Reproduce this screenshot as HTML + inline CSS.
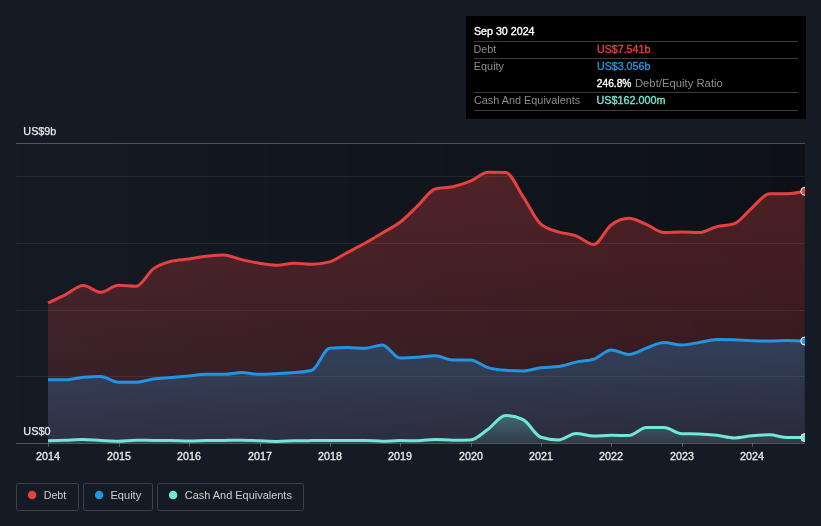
<!DOCTYPE html>
<html><head><meta charset="utf-8">
<style>
html,body{margin:0;padding:0;}
body{width:821px;height:526px;overflow:hidden;background:#151b24;position:relative;font-family:"Liberation Sans",sans-serif;}
svg{position:absolute;left:0;top:0;will-change:transform;}
</style></head><body>
<svg width="821" height="526" viewBox="0 0 821 526">
<defs>
<linearGradient id="bgg" x1="0" y1="0" x2="1" y2="0">
<stop offset="0" stop-color="#000" stop-opacity="0"/>
<stop offset="1" stop-color="#000" stop-opacity="0.35"/>
</linearGradient>
<linearGradient id="dg" x1="0" y1="0" x2="0" y2="1">
<stop offset="0" stop-color="#e64141" stop-opacity="0.30"/>
<stop offset="1" stop-color="#e64141" stop-opacity="0.135"/>
</linearGradient>
<linearGradient id="eg" x1="0" y1="0" x2="0" y2="1">
<stop offset="0" stop-color="#2394df" stop-opacity="0.30"/>
<stop offset="1" stop-color="#2394df" stop-opacity="0.145"/>
</linearGradient>
<linearGradient id="cg" x1="0" y1="0" x2="0" y2="1">
<stop offset="0" stop-color="#71e7d6" stop-opacity="0.30"/>
<stop offset="1" stop-color="#71e7d6" stop-opacity="0.08"/>
</linearGradient>
<clipPath id="pc"><rect x="16" y="0" width="789" height="443"/></clipPath>
</defs>
<rect x="16" y="143" width="789" height="300" fill="url(#bgg)"/>
<g clip-path="url(#pc)">
<path d="M48.00,303.00C53.87,300.26,59.73,297.52,65.60,294.60C71.47,291.68,77.33,285.50,83.20,285.50C89.07,285.50,94.93,292.30,100.80,292.30C106.67,292.30,112.53,285.30,118.40,285.30C124.27,285.30,130.13,286.30,136.00,286.30C141.87,286.30,147.73,272.77,153.60,268.60C159.47,264.43,165.33,262.83,171.20,261.30C177.07,259.77,182.93,259.85,188.80,259.00C194.67,258.15,200.53,256.87,206.40,256.20C212.27,255.53,218.13,255.00,224.00,255.00C229.87,255.00,235.73,258.22,241.60,259.60C247.47,260.98,253.33,262.35,259.20,263.30C265.07,264.25,270.93,265.30,276.80,265.30C282.67,265.30,288.53,263.30,294.40,263.30C300.27,263.30,306.13,264.30,312.00,264.30C317.87,264.30,323.73,263.50,329.60,261.90C335.47,260.30,341.33,255.70,347.20,252.60C353.07,249.50,358.93,246.57,364.80,243.30C370.67,240.03,376.53,236.50,382.40,233.00C388.27,229.50,394.13,226.82,400.00,222.30C405.87,217.78,411.73,211.45,417.60,205.90C423.47,200.35,429.33,190.53,435.20,189.00C441.07,187.47,446.93,188.00,452.80,186.70C458.67,185.40,464.53,183.60,470.40,181.20C476.27,178.80,482.13,172.30,488.00,172.30C493.87,172.30,499.73,172.37,505.60,172.50C511.47,172.63,517.33,188.18,523.20,196.80C529.07,205.42,534.93,219.07,540.80,224.20C546.67,229.33,552.53,229.97,558.40,231.90C564.27,233.83,570.13,233.70,576.00,235.80C581.87,237.90,587.73,244.50,593.60,244.50C599.47,244.50,605.33,229.37,611.20,225.00C617.07,220.63,622.93,218.30,628.80,218.30C634.67,218.30,640.53,222.02,646.40,224.40C652.27,226.78,658.13,232.60,664.00,232.60C669.87,232.60,675.73,231.90,681.60,231.90C687.47,231.90,693.33,232.60,699.20,232.60C705.07,232.60,710.93,228.10,716.80,226.60C722.67,225.10,728.53,225.60,734.40,223.60C740.27,221.60,746.13,212.77,752.00,207.80C757.87,202.83,763.73,193.80,769.60,193.80C775.47,193.80,781.33,193.80,787.20,193.80C793.07,193.80,798.93,192.55,804.80,191.30L804.80,443 L48.00,443 Z" fill="url(#dg)"/>
<path d="M48.00,379.70C53.87,379.70,59.73,379.70,65.60,379.70C71.47,379.70,77.33,377.77,83.20,377.30C89.07,376.83,94.93,376.60,100.80,376.60C106.67,376.60,112.53,382.20,118.40,382.20C124.27,382.20,130.13,382.20,136.00,382.20C141.87,382.20,147.73,379.78,153.60,379.00C159.47,378.22,165.33,378.02,171.20,377.50C177.07,376.98,182.93,376.43,188.80,375.90C194.67,375.37,200.53,374.30,206.40,374.30C212.27,374.30,218.13,374.30,224.00,374.30C229.87,374.30,235.73,372.60,241.60,372.60C247.47,372.60,253.33,374.30,259.20,374.30C265.07,374.30,270.93,373.98,276.80,373.70C282.67,373.42,288.53,373.18,294.40,372.60C300.27,372.02,306.13,371.80,312.00,370.20C317.87,368.60,323.73,348.60,329.60,348.20C335.47,347.80,341.33,347.60,347.20,347.60C353.07,347.60,358.93,348.20,364.80,348.20C370.67,348.20,376.53,345.00,382.40,345.00C388.27,345.00,394.13,358.10,400.00,358.10C405.87,358.10,411.73,357.70,417.60,357.30C423.47,356.90,429.33,355.70,435.20,355.70C441.07,355.70,446.93,359.90,452.80,359.90C458.67,359.90,464.53,359.90,470.40,359.90C476.27,359.90,482.13,365.87,488.00,367.60C493.87,369.33,499.73,369.90,505.60,370.30C511.47,370.70,517.33,370.90,523.20,370.90C529.07,370.90,534.93,368.42,540.80,367.70C546.67,366.98,552.53,367.33,558.40,366.60C564.27,365.87,570.13,363.32,576.00,362.10C581.87,360.88,587.73,361.17,593.60,359.30C599.47,357.43,605.33,350.00,611.20,350.00C617.07,350.00,622.93,354.40,628.80,354.40C634.67,354.40,640.53,350.18,646.40,348.20C652.27,346.22,658.13,342.50,664.00,342.50C669.87,342.50,675.73,344.90,681.60,344.90C687.47,344.90,693.33,343.28,699.20,342.40C705.07,341.52,710.93,339.60,716.80,339.60C722.67,339.60,728.53,339.67,734.40,339.80C740.27,339.93,746.13,340.73,752.00,340.80C757.87,340.87,763.73,340.90,769.60,340.90C775.47,340.90,781.33,340.40,787.20,340.40C793.07,340.40,798.93,340.70,804.80,341.00L804.80,443 L48.00,443 Z" fill="url(#eg)"/>
<path d="M48.00,440.80C53.87,440.60,59.73,440.40,65.60,440.20C71.47,440.00,77.33,439.60,83.20,439.60C89.07,439.60,94.93,440.23,100.80,440.50C106.67,440.77,112.53,441.20,118.40,441.20C124.27,441.20,130.13,440.20,136.00,440.20C141.87,440.20,147.73,440.35,153.60,440.40C159.47,440.45,165.33,440.43,171.20,440.50C177.07,440.57,182.93,441.00,188.80,441.00C194.67,441.00,200.53,440.70,206.40,440.60C212.27,440.50,218.13,440.47,224.00,440.40C229.87,440.33,235.73,440.20,241.60,440.20C247.47,440.20,253.33,440.60,259.20,440.80C265.07,441.00,270.93,441.40,276.80,441.40C282.67,441.40,288.53,440.93,294.40,440.80C300.27,440.67,306.13,440.65,312.00,440.60C317.87,440.55,323.73,440.50,329.60,440.50C335.47,440.50,341.33,440.50,347.20,440.50C353.07,440.50,358.93,440.50,364.80,440.50C370.67,440.50,376.53,441.20,382.40,441.20C388.27,441.20,394.13,440.60,400.00,440.60C405.87,440.60,411.73,440.80,417.60,440.80C423.47,440.80,429.33,439.40,435.20,439.40C441.07,439.40,446.93,440.20,452.80,440.20C458.67,440.20,464.53,440.13,470.40,440.00C476.27,439.87,482.13,433.30,488.00,429.20C493.87,425.10,499.73,415.40,505.60,415.40C511.47,415.40,517.33,416.83,523.20,419.70C529.07,422.57,534.93,435.40,540.80,437.20C546.67,439.00,552.53,439.90,558.40,439.90C564.27,439.90,570.13,433.50,576.00,433.50C581.87,433.50,587.73,436.10,593.60,436.10C599.47,436.10,605.33,435.30,611.20,435.30C617.07,435.30,622.93,435.60,628.80,435.60C634.67,435.60,640.53,427.60,646.40,427.60C652.27,427.60,658.13,427.60,664.00,427.60C669.87,427.60,675.73,433.57,681.60,433.70C687.47,433.83,693.33,433.77,699.20,433.90C705.07,434.03,710.93,434.53,716.80,435.20C722.67,435.87,728.53,437.90,734.40,437.90C740.27,437.90,746.13,436.22,752.00,435.70C757.87,435.18,763.73,434.80,769.60,434.80C775.47,434.80,781.33,437.60,787.20,437.60C793.07,437.60,798.93,437.60,804.80,437.60L804.80,443 L48.00,443 Z" fill="url(#cg)"/>
</g>
<g fill="#fff">
<rect x="16" y="143" width="789" height="1" fill-opacity="0.25"/>
<rect x="16" y="176" width="789" height="1" fill-opacity="0.07"/>
<rect x="16" y="243" width="789" height="1" fill-opacity="0.07"/>
<rect x="16" y="310" width="789" height="1" fill-opacity="0.07"/>
<rect x="16" y="376" width="789" height="1" fill-opacity="0.07"/>
</g>
<g clip-path="url(#pc)" fill="none" stroke-width="3" stroke-linejoin="round" stroke-linecap="butt">
<path d="M48.00,303.00C53.87,300.26,59.73,297.52,65.60,294.60C71.47,291.68,77.33,285.50,83.20,285.50C89.07,285.50,94.93,292.30,100.80,292.30C106.67,292.30,112.53,285.30,118.40,285.30C124.27,285.30,130.13,286.30,136.00,286.30C141.87,286.30,147.73,272.77,153.60,268.60C159.47,264.43,165.33,262.83,171.20,261.30C177.07,259.77,182.93,259.85,188.80,259.00C194.67,258.15,200.53,256.87,206.40,256.20C212.27,255.53,218.13,255.00,224.00,255.00C229.87,255.00,235.73,258.22,241.60,259.60C247.47,260.98,253.33,262.35,259.20,263.30C265.07,264.25,270.93,265.30,276.80,265.30C282.67,265.30,288.53,263.30,294.40,263.30C300.27,263.30,306.13,264.30,312.00,264.30C317.87,264.30,323.73,263.50,329.60,261.90C335.47,260.30,341.33,255.70,347.20,252.60C353.07,249.50,358.93,246.57,364.80,243.30C370.67,240.03,376.53,236.50,382.40,233.00C388.27,229.50,394.13,226.82,400.00,222.30C405.87,217.78,411.73,211.45,417.60,205.90C423.47,200.35,429.33,190.53,435.20,189.00C441.07,187.47,446.93,188.00,452.80,186.70C458.67,185.40,464.53,183.60,470.40,181.20C476.27,178.80,482.13,172.30,488.00,172.30C493.87,172.30,499.73,172.37,505.60,172.50C511.47,172.63,517.33,188.18,523.20,196.80C529.07,205.42,534.93,219.07,540.80,224.20C546.67,229.33,552.53,229.97,558.40,231.90C564.27,233.83,570.13,233.70,576.00,235.80C581.87,237.90,587.73,244.50,593.60,244.50C599.47,244.50,605.33,229.37,611.20,225.00C617.07,220.63,622.93,218.30,628.80,218.30C634.67,218.30,640.53,222.02,646.40,224.40C652.27,226.78,658.13,232.60,664.00,232.60C669.87,232.60,675.73,231.90,681.60,231.90C687.47,231.90,693.33,232.60,699.20,232.60C705.07,232.60,710.93,228.10,716.80,226.60C722.67,225.10,728.53,225.60,734.40,223.60C740.27,221.60,746.13,212.77,752.00,207.80C757.87,202.83,763.73,193.80,769.60,193.80C775.47,193.80,781.33,193.80,787.20,193.80C793.07,193.80,798.93,192.55,804.80,191.30" stroke="#e64141"/>
<path d="M48.00,379.70C53.87,379.70,59.73,379.70,65.60,379.70C71.47,379.70,77.33,377.77,83.20,377.30C89.07,376.83,94.93,376.60,100.80,376.60C106.67,376.60,112.53,382.20,118.40,382.20C124.27,382.20,130.13,382.20,136.00,382.20C141.87,382.20,147.73,379.78,153.60,379.00C159.47,378.22,165.33,378.02,171.20,377.50C177.07,376.98,182.93,376.43,188.80,375.90C194.67,375.37,200.53,374.30,206.40,374.30C212.27,374.30,218.13,374.30,224.00,374.30C229.87,374.30,235.73,372.60,241.60,372.60C247.47,372.60,253.33,374.30,259.20,374.30C265.07,374.30,270.93,373.98,276.80,373.70C282.67,373.42,288.53,373.18,294.40,372.60C300.27,372.02,306.13,371.80,312.00,370.20C317.87,368.60,323.73,348.60,329.60,348.20C335.47,347.80,341.33,347.60,347.20,347.60C353.07,347.60,358.93,348.20,364.80,348.20C370.67,348.20,376.53,345.00,382.40,345.00C388.27,345.00,394.13,358.10,400.00,358.10C405.87,358.10,411.73,357.70,417.60,357.30C423.47,356.90,429.33,355.70,435.20,355.70C441.07,355.70,446.93,359.90,452.80,359.90C458.67,359.90,464.53,359.90,470.40,359.90C476.27,359.90,482.13,365.87,488.00,367.60C493.87,369.33,499.73,369.90,505.60,370.30C511.47,370.70,517.33,370.90,523.20,370.90C529.07,370.90,534.93,368.42,540.80,367.70C546.67,366.98,552.53,367.33,558.40,366.60C564.27,365.87,570.13,363.32,576.00,362.10C581.87,360.88,587.73,361.17,593.60,359.30C599.47,357.43,605.33,350.00,611.20,350.00C617.07,350.00,622.93,354.40,628.80,354.40C634.67,354.40,640.53,350.18,646.40,348.20C652.27,346.22,658.13,342.50,664.00,342.50C669.87,342.50,675.73,344.90,681.60,344.90C687.47,344.90,693.33,343.28,699.20,342.40C705.07,341.52,710.93,339.60,716.80,339.60C722.67,339.60,728.53,339.67,734.40,339.80C740.27,339.93,746.13,340.73,752.00,340.80C757.87,340.87,763.73,340.90,769.60,340.90C775.47,340.90,781.33,340.40,787.20,340.40C793.07,340.40,798.93,340.70,804.80,341.00" stroke="#2394df"/>
<path d="M48.00,440.80C53.87,440.60,59.73,440.40,65.60,440.20C71.47,440.00,77.33,439.60,83.20,439.60C89.07,439.60,94.93,440.23,100.80,440.50C106.67,440.77,112.53,441.20,118.40,441.20C124.27,441.20,130.13,440.20,136.00,440.20C141.87,440.20,147.73,440.35,153.60,440.40C159.47,440.45,165.33,440.43,171.20,440.50C177.07,440.57,182.93,441.00,188.80,441.00C194.67,441.00,200.53,440.70,206.40,440.60C212.27,440.50,218.13,440.47,224.00,440.40C229.87,440.33,235.73,440.20,241.60,440.20C247.47,440.20,253.33,440.60,259.20,440.80C265.07,441.00,270.93,441.40,276.80,441.40C282.67,441.40,288.53,440.93,294.40,440.80C300.27,440.67,306.13,440.65,312.00,440.60C317.87,440.55,323.73,440.50,329.60,440.50C335.47,440.50,341.33,440.50,347.20,440.50C353.07,440.50,358.93,440.50,364.80,440.50C370.67,440.50,376.53,441.20,382.40,441.20C388.27,441.20,394.13,440.60,400.00,440.60C405.87,440.60,411.73,440.80,417.60,440.80C423.47,440.80,429.33,439.40,435.20,439.40C441.07,439.40,446.93,440.20,452.80,440.20C458.67,440.20,464.53,440.13,470.40,440.00C476.27,439.87,482.13,433.30,488.00,429.20C493.87,425.10,499.73,415.40,505.60,415.40C511.47,415.40,517.33,416.83,523.20,419.70C529.07,422.57,534.93,435.40,540.80,437.20C546.67,439.00,552.53,439.90,558.40,439.90C564.27,439.90,570.13,433.50,576.00,433.50C581.87,433.50,587.73,436.10,593.60,436.10C599.47,436.10,605.33,435.30,611.20,435.30C617.07,435.30,622.93,435.60,628.80,435.60C634.67,435.60,640.53,427.60,646.40,427.60C652.27,427.60,658.13,427.60,664.00,427.60C669.87,427.60,675.73,433.57,681.60,433.70C687.47,433.83,693.33,433.77,699.20,433.90C705.07,434.03,710.93,434.53,716.80,435.20C722.67,435.87,728.53,437.90,734.40,437.90C740.27,437.90,746.13,436.22,752.00,435.70C757.87,435.18,763.73,434.80,769.60,434.80C775.47,434.80,781.33,437.60,787.20,437.60C793.07,437.60,798.93,437.60,804.80,437.60" stroke="#71e7d6"/>
</g>
<rect x="16" y="443" width="789" height="1" fill="#fff" fill-opacity="0.25"/>
<g fill="#fff" fill-opacity="0.25">
<rect x="48" y="443" width="1" height="4"/>
<rect x="119" y="443" width="1" height="4"/>
<rect x="189" y="443" width="1" height="4"/>
<rect x="260" y="443" width="1" height="4"/>
<rect x="330" y="443" width="1" height="4"/>
<rect x="400" y="443" width="1" height="4"/>
<rect x="471" y="443" width="1" height="4"/>
<rect x="541" y="443" width="1" height="4"/>
<rect x="611" y="443" width="1" height="4"/>
<rect x="682" y="443" width="1" height="4"/>
<rect x="752" y="443" width="1" height="4"/>
</g>
<g clip-path="url(#pc)" stroke="#fff" stroke-width="1">
<circle cx="804.80" cy="191.30" r="4" fill="#e64141"/>
<circle cx="804.80" cy="341.00" r="4" fill="#2394df"/>
<circle cx="804.80" cy="437.60" r="4" fill="#71e7d6"/>
</g>
<g font-family="Liberation Sans, sans-serif">
<text x="23.35" y="135.00" font-size="11.00" font-weight="normal" fill="#ececec" textLength="33.04" lengthAdjust="spacingAndGlyphs" stroke="#ececec" stroke-width="0.25">US$9b</text>
<text x="23.35" y="435.00" font-size="11.00" font-weight="normal" fill="#ececec" textLength="27.14" lengthAdjust="spacingAndGlyphs" stroke="#ececec" stroke-width="0.25">US$0</text>
<text x="36.02" y="459.80" font-size="10.50" font-weight="normal" fill="#ececec" textLength="23.87" lengthAdjust="spacingAndGlyphs" stroke="#ececec" stroke-width="0.3">2014</text>
<text x="107.02" y="459.80" font-size="10.50" font-weight="normal" fill="#ececec" textLength="23.87" lengthAdjust="spacingAndGlyphs" stroke="#ececec" stroke-width="0.3">2015</text>
<text x="177.02" y="459.80" font-size="10.50" font-weight="normal" fill="#ececec" textLength="23.87" lengthAdjust="spacingAndGlyphs" stroke="#ececec" stroke-width="0.3">2016</text>
<text x="248.02" y="459.80" font-size="10.50" font-weight="normal" fill="#ececec" textLength="23.87" lengthAdjust="spacingAndGlyphs" stroke="#ececec" stroke-width="0.3">2017</text>
<text x="318.02" y="459.80" font-size="10.50" font-weight="normal" fill="#ececec" textLength="23.87" lengthAdjust="spacingAndGlyphs" stroke="#ececec" stroke-width="0.3">2018</text>
<text x="388.02" y="459.80" font-size="10.50" font-weight="normal" fill="#ececec" textLength="23.87" lengthAdjust="spacingAndGlyphs" stroke="#ececec" stroke-width="0.3">2019</text>
<text x="459.02" y="459.80" font-size="10.50" font-weight="normal" fill="#ececec" textLength="23.87" lengthAdjust="spacingAndGlyphs" stroke="#ececec" stroke-width="0.3">2020</text>
<text x="529.02" y="459.80" font-size="10.50" font-weight="normal" fill="#ececec" textLength="23.87" lengthAdjust="spacingAndGlyphs" stroke="#ececec" stroke-width="0.3">2021</text>
<text x="599.02" y="459.80" font-size="10.50" font-weight="normal" fill="#ececec" textLength="23.87" lengthAdjust="spacingAndGlyphs" stroke="#ececec" stroke-width="0.3">2022</text>
<text x="670.02" y="459.80" font-size="10.50" font-weight="normal" fill="#ececec" textLength="23.87" lengthAdjust="spacingAndGlyphs" stroke="#ececec" stroke-width="0.3">2023</text>
<text x="740.02" y="459.80" font-size="10.50" font-weight="normal" fill="#ececec" textLength="23.87" lengthAdjust="spacingAndGlyphs" stroke="#ececec" stroke-width="0.3">2024</text>
<rect x="466" y="16" width="340" height="103" fill="#000"/>
<rect x="474" y="41" width="324" height="1" fill="#3b3b3b"/>
<rect x="474" y="58" width="324" height="1" fill="#3b3b3b"/>
<rect x="474" y="92" width="324" height="1" fill="#3b3b3b"/>
<rect x="474" y="110" width="324" height="1" fill="#3b3b3b"/>
<text x="473.94" y="34.90" font-size="10.60" font-weight="normal" fill="#ffffff" textLength="60.63" lengthAdjust="spacingAndGlyphs" stroke="#ffffff" stroke-width="0.35">Sep 30 2024</text>
<text x="473.48" y="52.80" font-size="10.50" font-weight="normal" fill="#8c8c8c" textLength="22.82" lengthAdjust="spacingAndGlyphs">Debt</text>
<text x="473.84" y="69.80" font-size="10.50" font-weight="normal" fill="#8c8c8c" textLength="30.18" lengthAdjust="spacingAndGlyphs">Equity</text>
<text x="473.91" y="103.80" font-size="10.50" font-weight="normal" fill="#8c8c8c" textLength="106.35" lengthAdjust="spacingAndGlyphs">Cash And Equivalents</text>
<text x="596.97" y="52.70" font-size="10.50" font-weight="normal" fill="#e64141" textLength="53.39" lengthAdjust="spacingAndGlyphs" stroke="#e64141" stroke-width="0.35">US$7.541b</text>
<text x="596.97" y="69.70" font-size="10.50" font-weight="normal" fill="#2394df" textLength="53.39" lengthAdjust="spacingAndGlyphs" stroke="#2394df" stroke-width="0.35">US$3.056b</text>
<text x="596.87" y="87.00" font-size="10.50" font-weight="normal" fill="#ffffff" textLength="34.59" lengthAdjust="spacingAndGlyphs" stroke="#ffffff" stroke-width="0.35">246.8%</text>
<text x="634.92" y="87.00" font-size="10.50" font-weight="normal" fill="#8c8c8c" textLength="87.95" lengthAdjust="spacingAndGlyphs">Debt/Equity Ratio</text>
<text x="596.57" y="103.90" font-size="10.50" font-weight="normal" fill="#71e7d6" textLength="69.04" lengthAdjust="spacingAndGlyphs" stroke="#71e7d6" stroke-width="0.35">US$162.000m</text>
<rect x="16.5" y="483.5" width="62" height="27" rx="2" fill="none" stroke="#3d424a" stroke-width="1"/>
<circle cx="32.1" cy="495" r="4.25" fill="#e64141"/>
<text x="43.66" y="498.80" font-size="10.50" font-weight="normal" fill="#cfcfcf" textLength="22.60" lengthAdjust="spacingAndGlyphs">Debt</text>
<rect x="83.5" y="483.5" width="69" height="27" rx="2" fill="none" stroke="#3d424a" stroke-width="1"/>
<circle cx="99.1" cy="495" r="4.25" fill="#2394df"/>
<text x="110.45" y="498.80" font-size="10.50" font-weight="normal" fill="#cfcfcf" textLength="30.76" lengthAdjust="spacingAndGlyphs">Equity</text>
<rect x="157.5" y="483.5" width="146" height="27" rx="2" fill="none" stroke="#3d424a" stroke-width="1"/>
<circle cx="173.1" cy="495" r="4.25" fill="#71e7d6"/>
<text x="184.76" y="498.80" font-size="10.50" font-weight="normal" fill="#cfcfcf" textLength="107.13" lengthAdjust="spacingAndGlyphs">Cash And Equivalents</text>
</g>
</svg>
</body></html>
